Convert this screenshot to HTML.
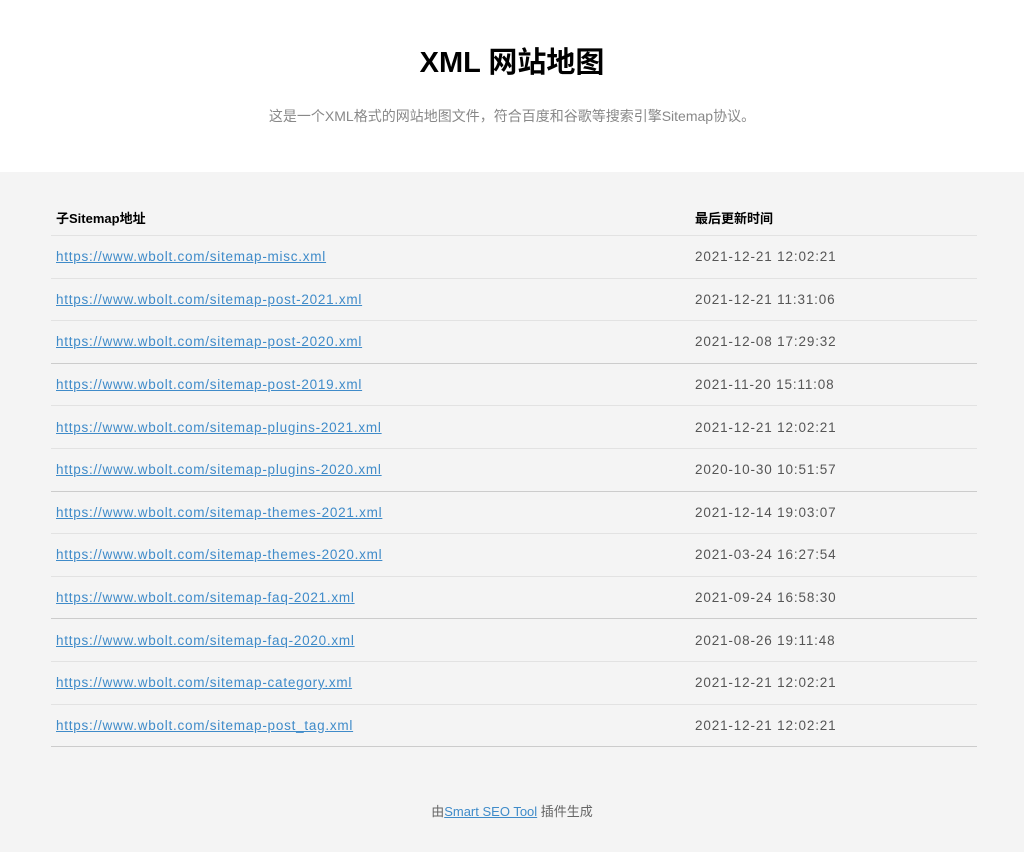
<!DOCTYPE html><html><head><meta charset="utf-8"><style>
body{margin:0;background:#f4f4f4;font-family:"Liberation Sans","Noto Sans CJK SC",sans-serif;}
.top{background:#fff;height:172px;text-align:center;overflow:hidden}
h1{margin:0;padding-top:44px;font-size:29px;line-height:38px;color:#000;font-weight:bold}
.sub{margin-top:24px;font-size:14px;color:#888}
table{position:absolute;left:51px;top:200px;width:926px;border-collapse:collapse;font-size:13.5px}
th{text-align:left;font-size:13px;height:35px;padding:0 5px;border-bottom:1px solid #e2e2e2;color:#000}
td{height:41.6px;padding:0 5px;border-bottom:1px solid #e2e2e2;color:#555;letter-spacing:0.85px}
td a{letter-spacing:0.75px}
tr.d td{border-bottom:1px solid #ccc}
a{color:#3f8bc9;text-decoration:underline}
.foot{position:absolute;top:801px;width:100%;text-align:center;font-size:13px;color:#666}
</style></head><body>
<div class="top"><h1>XML 网站地图</h1><div class="sub">这是一个XML格式的网站地图文件，符合百度和谷歌等搜索引擎Sitemap协议。</div></div>
<table><tr><th style="width:629px">子Sitemap地址</th><th>最后更新时间</th></tr>
<tr><td><a>https://www.wbolt.com/sitemap-misc.xml</a></td><td>2021-12-21 12:02:21</td></tr>
<tr><td><a>https://www.wbolt.com/sitemap-post-2021.xml</a></td><td>2021-12-21 11:31:06</td></tr>
<tr class="d"><td><a>https://www.wbolt.com/sitemap-post-2020.xml</a></td><td>2021-12-08 17:29:32</td></tr>
<tr><td><a>https://www.wbolt.com/sitemap-post-2019.xml</a></td><td>2021-11-20 15:11:08</td></tr>
<tr><td><a>https://www.wbolt.com/sitemap-plugins-2021.xml</a></td><td>2021-12-21 12:02:21</td></tr>
<tr class="d"><td><a>https://www.wbolt.com/sitemap-plugins-2020.xml</a></td><td>2020-10-30 10:51:57</td></tr>
<tr><td><a>https://www.wbolt.com/sitemap-themes-2021.xml</a></td><td>2021-12-14 19:03:07</td></tr>
<tr><td><a>https://www.wbolt.com/sitemap-themes-2020.xml</a></td><td>2021-03-24 16:27:54</td></tr>
<tr class="d"><td><a>https://www.wbolt.com/sitemap-faq-2021.xml</a></td><td>2021-09-24 16:58:30</td></tr>
<tr><td><a>https://www.wbolt.com/sitemap-faq-2020.xml</a></td><td>2021-08-26 19:11:48</td></tr>
<tr><td><a>https://www.wbolt.com/sitemap-category.xml</a></td><td>2021-12-21 12:02:21</td></tr>
<tr class="d"><td><a>https://www.wbolt.com/sitemap-post_tag.xml</a></td><td>2021-12-21 12:02:21</td></tr>
</table>
<div class="foot">由<a>Smart SEO Tool</a> 插件生成</div>
</body></html>
